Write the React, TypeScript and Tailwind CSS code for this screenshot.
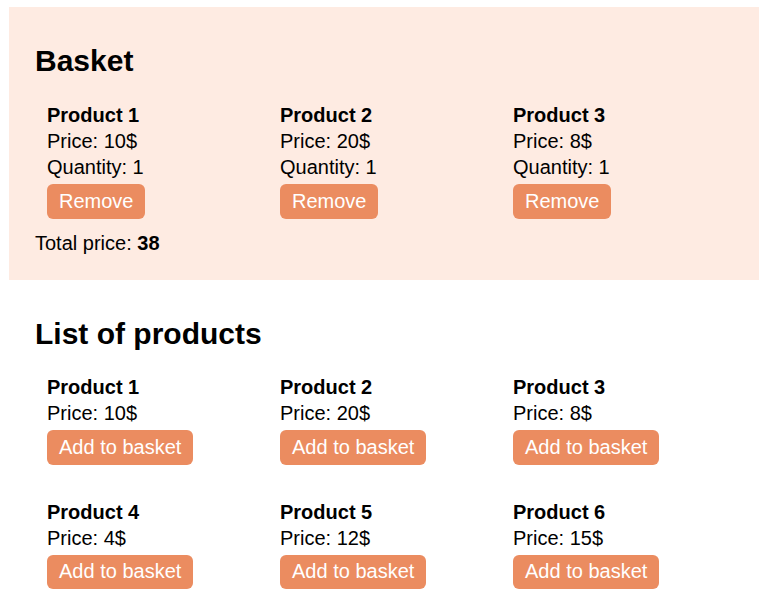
import React from "react";

const basket = [
  { name: "Product 1", price: 10, qty: 1 },
  { name: "Product 2", price: 20, qty: 1 },
  { name: "Product 3", price: 8, qty: 1 },
];

const products = [
  { name: "Product 1", price: 10 },
  { name: "Product 2", price: 20 },
  { name: "Product 3", price: 8 },
  { name: "Product 4", price: 4 },
  { name: "Product 5", price: 12 },
  { name: "Product 6", price: 15 },
];

const btn =
  "mt-1 self-start rounded-md bg-[#eb8c60] px-3 py-[5.75px] text-[20px] leading-[23px] text-white";

function App() {
  const total = basket.reduce((s, p) => s + p.price * p.qty, 0);

  return (
    <div className="min-h-screen bg-white px-[9px] pt-[7px] font-['Liberation_Sans',Arial,sans-serif] text-[20px] leading-[26px] text-black">
      {/* basket */}
      <section className="bg-[#feebe2] pl-[26px] pt-[37px] pb-[24.5px]">
        <h2 className="text-[30px] font-bold leading-[34px]">Basket</h2>
        <div className="mt-6 grid grid-cols-[repeat(3,233px)] pl-3">
          {basket.map((p) => (
            <div key={p.name} className="flex flex-col">
              <span className="font-bold">{p.name}</span>
              <span>Price: {p.price}$</span>
              <span>Quantity: {p.qty}</span>
              <button className={btn}>Remove</button>
            </div>
          ))}
        </div>
        <p className="mt-[11px]">
          Total price: <b>{total}</b>
        </p>
      </section>

      {/* list of products */}
      <section className="pl-[26px] pt-[37px]">
        <h2 className="text-[30px] font-bold leading-[34px]">List of products</h2>
        <div className="mt-[23px] grid grid-cols-[repeat(3,233px)] gap-y-[34px] pl-3">
          {products.map((p) => (
            <div key={p.name} className="flex flex-col">
              <span className="font-bold">{p.name}</span>
              <span>Price: {p.price}$</span>
              <button className={btn}>Add to basket</button>
            </div>
          ))}
        </div>
      </section>
    </div>
  );
}

export default App;
